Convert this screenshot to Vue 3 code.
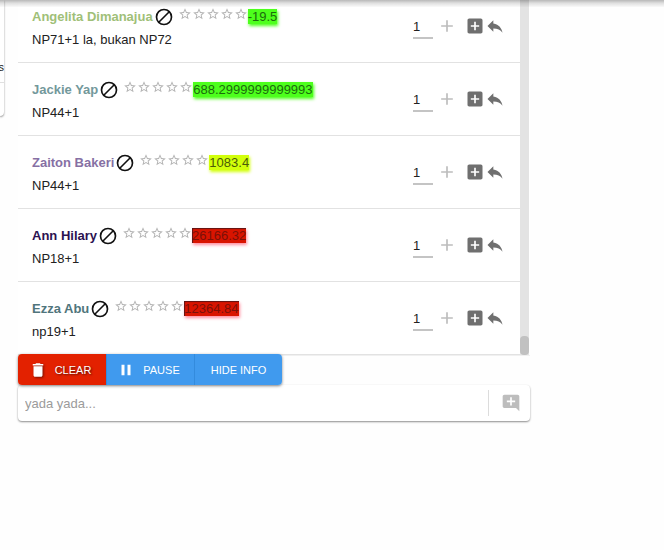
<script setup>
import { ref } from 'vue'

const comments = ref([
  { name: 'Angelita Dimanajua', text: 'NP71+1 la, bukan NP72', score: '-19.5', tone: 'green', color: '#9fc078', qty: '1' },
  { name: 'Jackie Yap', text: 'NP44+1', score: '688.2999999999993', tone: 'green', color: '#73989b', qty: '1' },
  { name: 'Zaiton Bakeri', text: 'NP44+1', score: '1083.4', tone: 'lime', color: '#8670a4', qty: '1' },
  { name: 'Ann Hilary', text: 'NP18+1', score: '26166.32', tone: 'red', color: '#2c1150', qty: '1' },
  { name: 'Ezza Abu', text: 'np19+1', score: '12364.84', tone: 'red', color: '#50757c', qty: '1' }
])
const message = ref('')
</script>

<template>
  <div class="page">
    <div class="topbar-shadow"></div>
    <aside class="side">
      <div class="side-head"><span>s</span></div>
    </aside>
    <main class="panel">
      <div class="viewport">
        <ul class="list">
          <li v-for="(c, i) in comments" :key="i" class="item">
            <div class="body">
              <div class="meta">
                <span class="name" :style="{ color: c.color }">{{ c.name }}</span>
                <button class="icon-btn block" type="button" aria-label="Block">
                  <svg width="20" height="20" viewBox="0 0 24 24"><circle cx="12" cy="12" r="9" /><path d="M5.7 18.3 18.3 5.7" /></svg>
                </button>
                <span class="stars">
                  <svg v-for="n in 5" :key="n" width="14" height="14" viewBox="0 0 24 24"><path d="M22 9.24l-7.19-.62L12 2 9.19 8.63 2 9.24l5.46 4.73L5.82 21 12 17.27 18.18 21l-1.63-7.03L22 9.24zM12 15.4l-3.76 2.27 1-4.28-3.32-2.88 4.38-.38L12 6.1l1.71 4.04 4.38.38-3.32 2.88 1 4.28L12 15.4z" /></svg>
                </span>
                <span class="score" :class="c.tone">{{ c.score }}</span>
              </div>
              <p class="text">{{ c.text }}</p>
            </div>
            <div class="actions">
              <input v-model="c.qty" class="qty" type="text" aria-label="Quantity">
              <button class="icon-btn add" type="button" aria-label="Increase">
                <svg width="20" height="20" viewBox="0 0 24 24"><path d="M19 13h-6v6h-2v-6H5v-2h6V5h2v6h6v2z" /></svg>
              </button>
              <button class="icon-btn" type="button" aria-label="Add item">
                <svg width="20" height="20" viewBox="0 0 24 24"><path d="M19 3H5c-1.11 0-2 .9-2 2v14c0 1.1.89 2 2 2h14c1.1 0 2-.9 2-2V5c0-1.1-.9-2-2-2zm-2 10h-4v4h-2v-4H7v-2h4V7h2v4h4v2z" /></svg>
              </button>
              <button class="icon-btn" type="button" aria-label="Reply">
                <svg width="20" height="20" viewBox="0 0 24 24"><path d="M10 9V5l-7 7 7 7v-4.1c5 0 8.5 1.6 11 5.1-1-5-4-10-11-11z" /></svg>
              </button>
            </div>
          </li>
        </ul>
        <div class="track"><div class="thumb"></div></div>
      </div>
      <div class="toolbar">
        <div class="group">
          <button class="btn clear" type="button">
            <svg width="18" height="18" viewBox="0 0 24 24"><path d="M6 19c0 1.1.9 2 2 2h8c1.1 0 2-.9 2-2V7H6v12zM19 4h-3.5l-1-1h-5l-1 1H5v2h14V4z" /></svg>
            <span>CLEAR</span>
          </button>
          <button class="btn" type="button">
            <svg width="18" height="18" viewBox="0 0 24 24"><path d="M6 19h4V5H6v14zm8-14v14h4V5h-4z" /></svg>
            <span>PAUSE</span>
          </button>
          <button class="btn" type="button"><span>HIDE INFO</span></button>
        </div>
      </div>
      <form class="composer" @submit.prevent>
        <input v-model="message" type="text" placeholder="yada yada..." aria-label="Comment">
        <button class="icon-btn send" type="submit" aria-label="Add comment">
          <svg width="20" height="20" viewBox="0 0 24 24"><path d="M21.99 4c0-1.1-.89-2-1.99-2H4c-1.1 0-2 .9-2 2v12c0 1.1.9 2 2 2h14l4 4-.01-18zM17 11h-4v4h-2v-4H7V9h4V5h2v4h4v2z" /></svg>
        </button>
      </form>
    </main>
  </div>
</template>

<style>
body {
  background: #fefefe;
}
</style>

<style scoped>
* {
  box-sizing: border-box;
}
.page {
  position: relative;
  display: grid;
  grid-template-columns: 4px minmax(0, 512px);
  column-gap: 14px;
  align-items: start;
  overflow: hidden;
  padding-bottom: 8px;
  font-family: "Liberation Sans", Arial, sans-serif;
  font-size: 13px;
  color: #212121;
}
.topbar-shadow {
  position: absolute;
  inset: 0 0 auto;
  height: 7px;
  background: linear-gradient(rgba(0, 0, 0, 0.28), rgba(0, 0, 0, 0.12) 45%, rgba(0, 0, 0, 0.02));
  z-index: 2;
}
.side {
  height: 116px;
  border-radius: 0 0 4px 0;
  background: #fff;
  box-shadow: 0 1px 2px rgba(0, 0, 0, 0.45);
}
.side-head {
  display: flex;
  align-items: flex-end;
  justify-content: flex-end;
  height: 83px;
  padding-bottom: 8px;
  border-bottom: 1px solid #e0e0e0;
  font-size: 11px;
  line-height: 14px;
  overflow: hidden;
}
.viewport {
  display: flex;
  height: 355px;
  overflow: hidden;
  align-items: flex-end;
  background: #fff;
}
.list {
  flex: 1;
  min-width: 0;
  margin: 0;
  padding: 0;
  list-style: none;
}
.item {
  display: flex;
  align-items: center;
  height: 73px;
  padding: 0 15px 0 14px;
  border-bottom: 1px solid #e2e2e2;
}
.body {
  flex: 1;
  min-width: 0;
  padding-top: 4px;
}
.meta {
  display: flex;
  align-items: center;
  height: 24px;
}
.name {
  font-weight: 700;
  white-space: nowrap;
}
.icon-btn {
  display: flex;
  align-items: center;
  justify-content: center;
  padding: 0;
  border: 0;
  background: none;
  color: #6f6f6f;
  fill: currentColor;
}
.block {
  margin: 2px 4px 0 1px;
}
.block svg {
  fill: none;
  stroke: #111;
  stroke-width: 2;
}
.stars {
  display: flex;
  padding-bottom: 4px;
  fill: #b4b4b4;
}
.score {
  line-height: 15px;
  white-space: nowrap;
}
.green {
  background: #4dff1c;
  color: #1b6b0c;
  box-shadow: 1px 2px 3px #4dff1c;
}
.lime {
  background: #d2ff0a;
  color: #4c5c08;
  box-shadow: 1px 2px 3px #d2ff0a;
}
.red {
  background: #d91400;
  color: #7c1008;
  box-shadow: 1px 2px 3px #ff8ea0, inset 1px 1px 1px #5c1414;
}
.text {
  margin: 0;
  line-height: 24px;
}
.actions {
  display: flex;
  align-items: center;
}
.qty {
  width: 20px;
  height: 26px;
  margin-right: 4px;
  padding: 2px 0 0;
  border: 0;
  border-bottom: 2px solid #c4c4c4;
  outline: 0;
  background: none;
  color: inherit;
  font: inherit;
}
.add {
  margin-right: 8px;
  color: #bdbdbd;
}
.track {
  display: flex;
  align-items: flex-end;
  align-self: stretch;
  width: 9px;
  margin-right: 1px;
  background: #e3e3e3;
}
.thumb {
  width: 9px;
  height: 19px;
  border-radius: 4px;
  background: #c1c1c1;
}
.toolbar {
  display: flex;
  height: 30px;
  border-top: 1px solid #f0f0f0;
}
.group {
  display: flex;
  height: 31px;
  margin-top: -2px;
  border-radius: 4px;
  box-shadow: 0 1px 3px rgba(0, 0, 0, 0.5);
  z-index: 1;
  overflow: hidden;
}
.btn {
  display: flex;
  align-items: center;
  justify-content: center;
  gap: 8px;
  min-width: 88px;
  padding: 0 14px;
  border: 0;
  background: #409aee;
  color: #fff;
  fill: #fff;
  font: 11px "Liberation Sans", Arial, sans-serif;
}
.btn + .btn {
  border-left: 1px solid #338bdd;
}
.btn svg {
  margin-left: -4px;
}
.clear {
  background: #e32100;
  text-shadow: 1px 1px 2px rgba(0, 0, 0, 0.6);
}
.clear svg {
  filter: drop-shadow(1px 1px 1px rgba(0, 0, 0, 0.5));
}
.composer {
  display: flex;
  align-items: center;
  height: 36px;
  border-radius: 4px;
  background: #fff;
  box-shadow: 0 1px 2px rgba(0, 0, 0, 0.45);
}
.composer input {
  flex: 1;
  min-width: 0;
  padding: 0 7px;
  border: 0;
  outline: 0;
  background: none;
  color: inherit;
  font: inherit;
}
.composer input::placeholder {
  color: #9b9b9b;
  opacity: 1;
}
.send {
  width: 42px;
  height: 26px;
  padding-left: 3px;
  border-left: 1px solid #dcdcdc;
  color: #bdbdbd;
}
</style>
